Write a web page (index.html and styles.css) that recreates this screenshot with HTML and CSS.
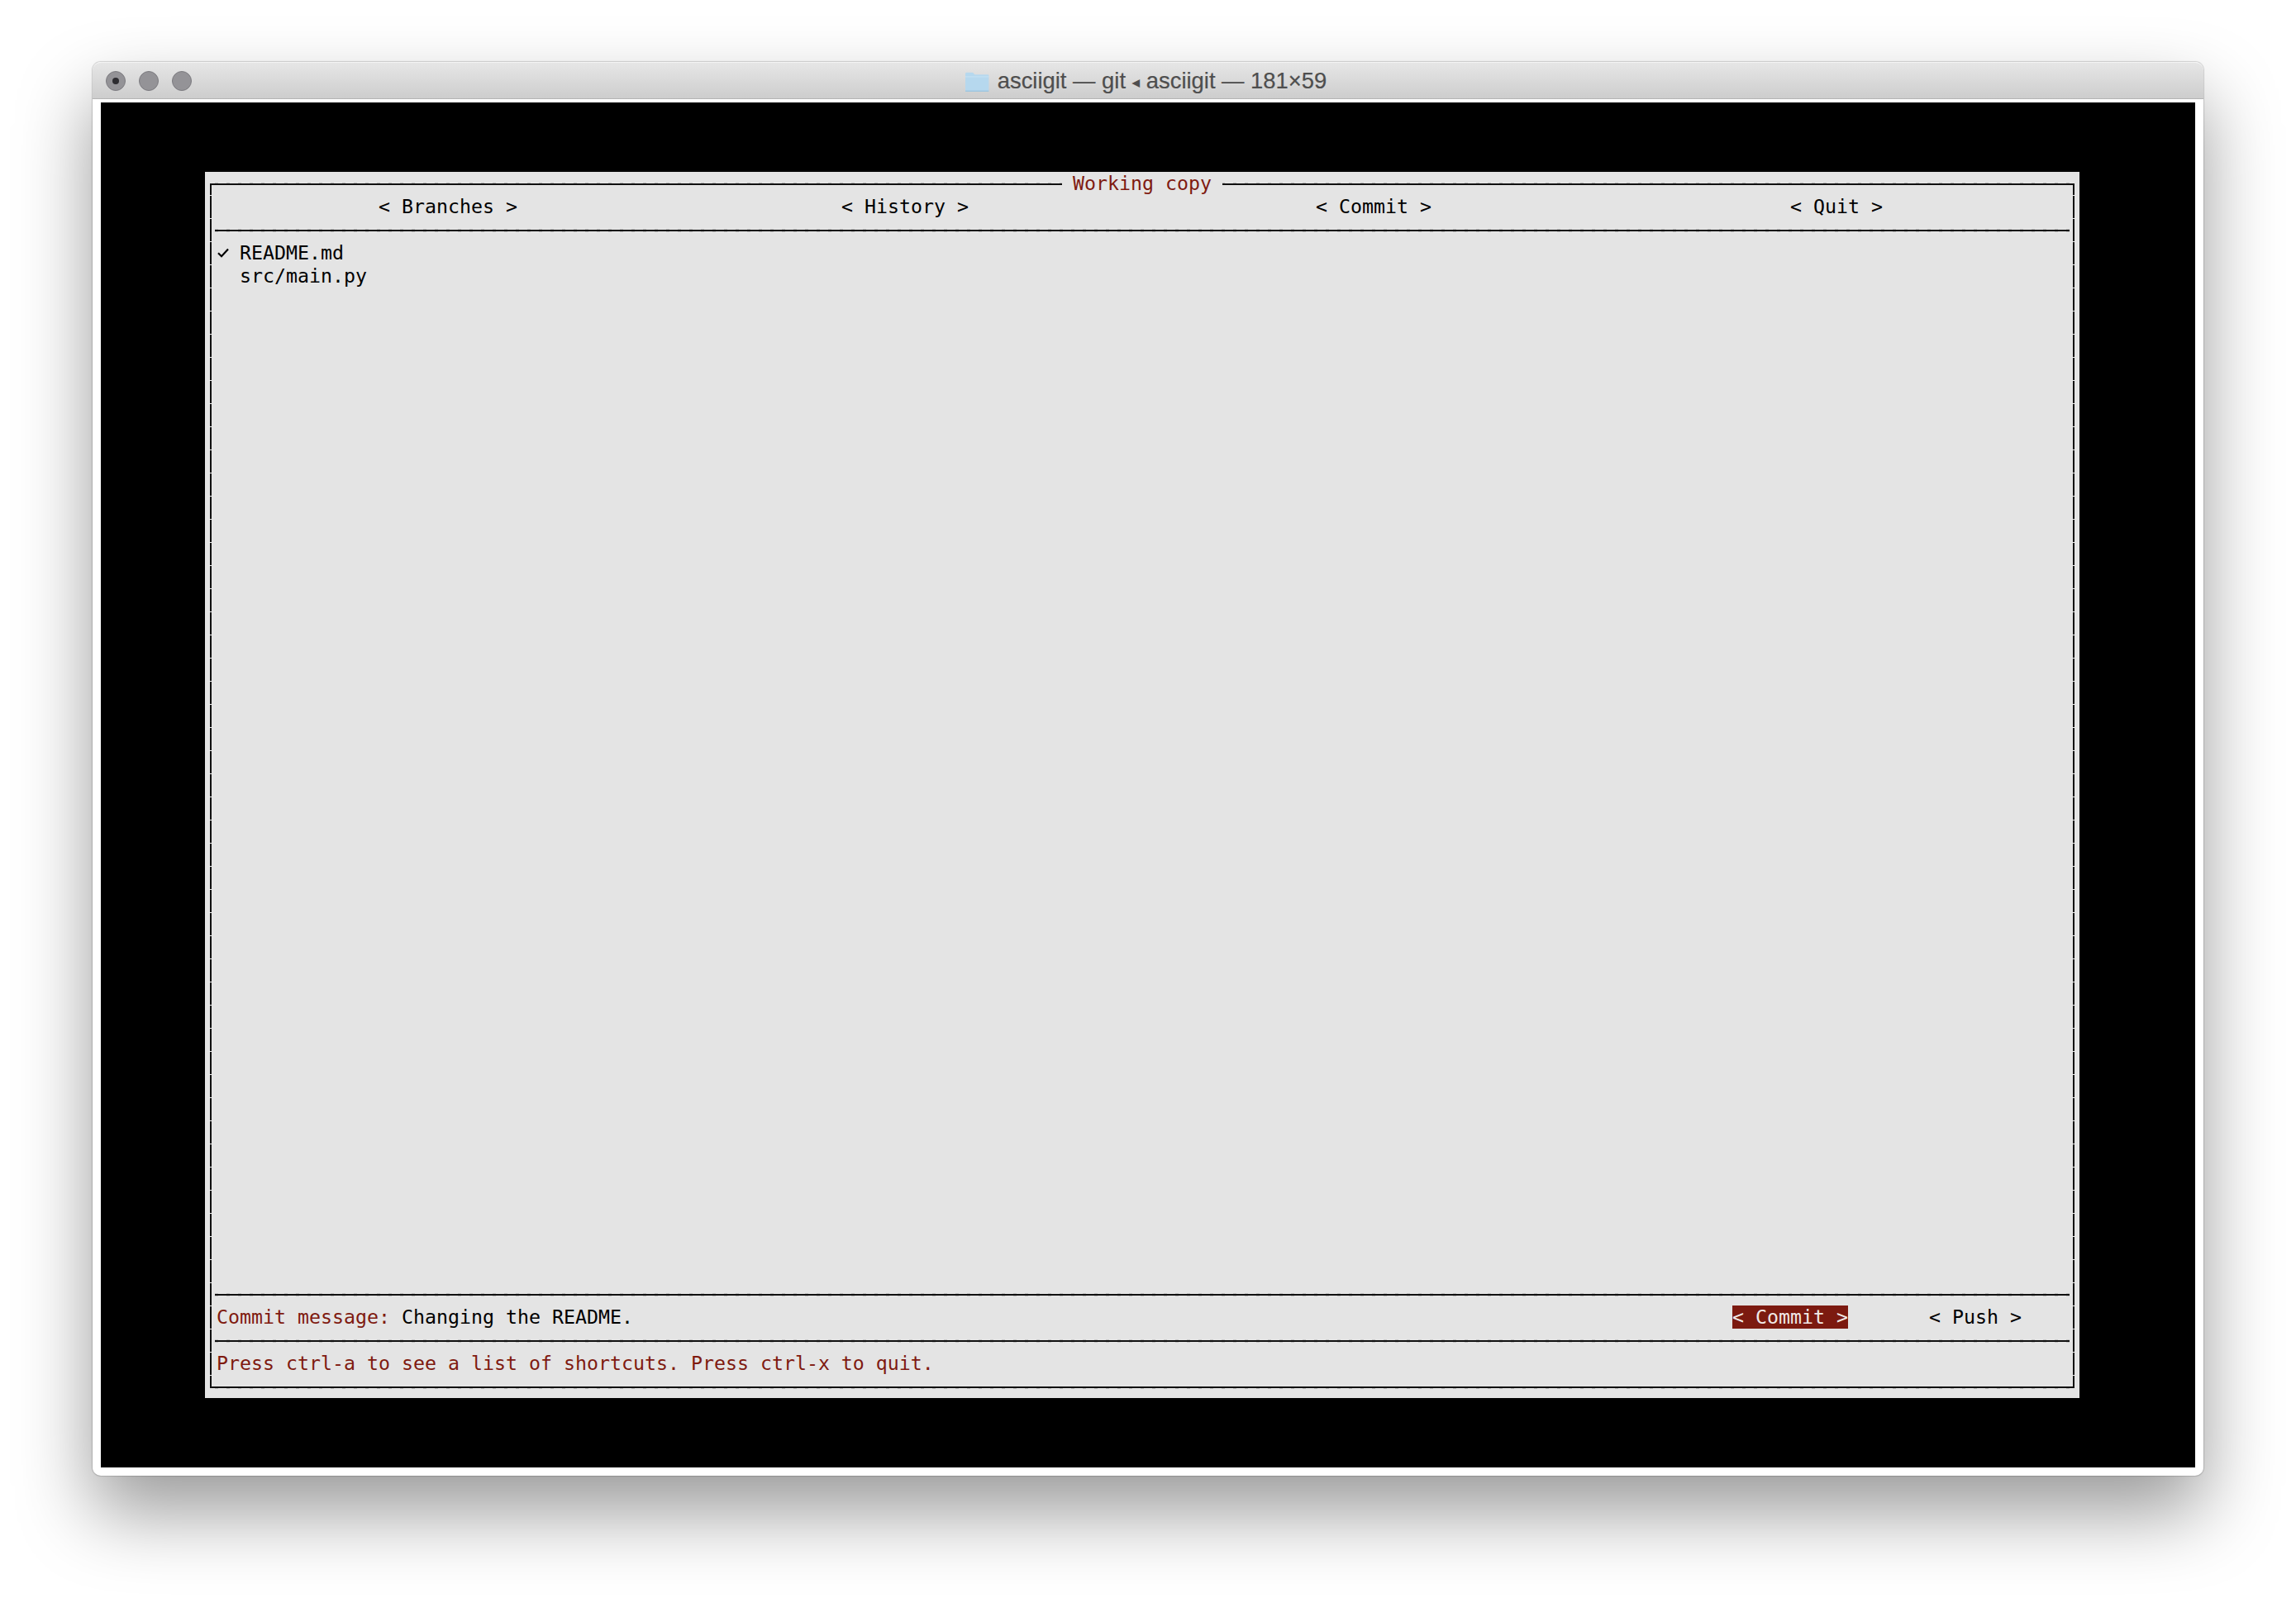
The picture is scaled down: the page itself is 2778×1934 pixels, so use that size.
FILE: index.html
```html
<!DOCTYPE html>
<html lang="en">
<head>
<meta charset="utf-8">
<title>asciigit</title>
<link rel="stylesheet" href="styles.css">
</head>
<body>
<div class="window">
  <header class="titlebar">
    <div class="lights">
      <span class="light light-active"></span>
      <span class="light"></span>
      <span class="light"></span>
    </div>
    <div class="title">
      <svg class="folder" width="30" height="24" viewBox="0 0 30 24" aria-hidden="true">
        <path d="M1 2.5C1 1.4 1.7.8 2.8.8h6.4c.8 0 1.3.3 1.8.9l1.4 1.5H28c.8 0 1.4.6 1.4 1.4v17.6c0 .8-.6 1.4-1.4 1.4H2.4c-.8 0-1.4-.6-1.4-1.4z" fill="#b6d8ee"/>
        <path d="M1 5.4h28.4v1H1z" fill="#c8e3f4"/>
        <path d="M1 22.6h28.4v.8c0 .3-.4.6-1.4.6H2.4c-1 0-1.4-.3-1.4-.6z" fill="#9fc6df"/>
      </svg>
      <span class="title-text">asciigit — git <span class="caret">◂</span> asciigit — 181×59</span>
    </div>
  </header>
  <main class="terminal">
    <section class="panel">
      <div class="frame">
        <div class="frame-title">Working copy</div>
        <nav class="row tabs">
          <span>&lt; Branches &gt;</span>
          <span>&lt; History &gt;</span>
          <span>&lt; Commit &gt;</span>
          <span>&lt; Quit &gt;</span>
        </nav>
        <div class="rule"></div>
        <ul class="files">
          <li class="row file">
            <span class="check">
              <svg width="14" height="12" viewBox="0 0 14 12" aria-hidden="true">
                <path d="M1 6.2l4 4L13 1.4" fill="none" stroke="#000" stroke-width="2.2"/>
              </svg>
            </span>
            <span>README.md</span>
          </li>
          <li class="row file">
            <span class="check"></span>
            <span>src/main.py</span>
          </li>
        </ul>
        <div class="rule"></div>
        <div class="row commit-row">
          <div class="message"><span class="red">Commit message: </span>Changing the README.</div>
          <span class="button button-focus">&lt; Commit &gt;</span>
          <span class="button">&lt; Push &gt;</span>
        </div>
        <div class="rule"></div>
        <div class="row red">Press ctrl-a to see a list of shortcuts. Press ctrl-x to quit.</div>
      </div>
    </section>
  </main>
</div>
</body>
</html>
```
FILE: styles.css
```css
* { box-sizing: border-box; }

html, body { margin: 0; background: #fff; }

body {
  width: 2778px;
  height: 1934px;
  padding: 75px 112px 148px;
  overflow: hidden;
}

.window {
  width: 2554px;
  height: 1711px;
  display: flex;
  flex-direction: column;
  background: #fff;
  border-radius: 10px;
  box-shadow: 0 44px 90px rgba(0, 0, 0, .4), 0 0 1px 1px rgba(0, 0, 0, .16);
}

.titlebar {
  height: 45px;
  flex: none;
  position: relative;
  display: flex;
  align-items: center;
  justify-content: center;
  padding-top: 2px;
  border-radius: 10px 10px 0 0;
  border-top: 1px solid #f4f4f4;
  border-bottom: 1px solid #b4b4b4;
  background: linear-gradient(#e6e6e6, #cdcdcd);
}

.lights {
  position: absolute;
  left: 16px;
  top: 10px;
  display: flex;
  gap: 16px;
}

.light {
  width: 24px;
  height: 24px;
  border-radius: 50%;
  background: #949397;
  border: 1px solid #7c7b80;
  display: flex;
  align-items: center;
  justify-content: center;
}

.light-active::after {
  content: "";
  width: 8px;
  height: 8px;
  border-radius: 50%;
  background: #2d2c30;
}

.title {
  display: flex;
  align-items: center;
  gap: 10px;
  margin-right: 6px;
  font-family: "Liberation Sans", sans-serif;
  font-size: 27.4px;
  line-height: 40px;
  color: #4e4e4e;
  white-space: pre;
  -webkit-text-stroke: .2px #4e4e4e;
}

.caret { font-family: "DejaVu Sans", sans-serif; font-size: 19px; vertical-align: 1px; }

.terminal {
  flex: none;
  height: 1652px;
  margin: 4px 10px 10px;
  padding: 84px 140px 84px 126px;
  background: #000;
  display: flex;
}

.panel {
  flex: 1;
  display: flex;
  padding: 14px 6px 12px;
  background: #e4e4e4;
  color: #000;
  font-family: "DejaVu Sans Mono", monospace;
  font-size: 23.25px;
  line-height: 28px;
}

.frame {
  flex: 1;
  position: relative;
  display: flex;
  flex-direction: column;
  padding: 12px 6px 14px;
  border: 2px solid #101010;
}

.frame::before {
  content: "";
  position: absolute;
  inset: -3px;
  pointer-events: none;
  background-image:
    linear-gradient(90deg, #bcbcbc 0 4px, transparent 4px),
    linear-gradient(90deg, #bcbcbc 0 4px, transparent 4px),
    linear-gradient(#eeeeee 0 1px, transparent 1px),
    linear-gradient(#eeeeee 0 1px, transparent 1px);
  background-size: 14px 1px, 14px 1px, 4px 28px, 4px 28px;
  background-repeat: repeat-x, repeat-x, repeat-y, repeat-y;
  background-position: 7px 0, 7px 100%, 0 15px, 100% 15px;
}

.frame-title {
  position: absolute;
  z-index: 1;
  left: 1029px;
  top: -16px;
  padding: 0 13px;
  background: #e4e4e4;
  color: #7f1a10;
  white-space: pre;
}

.row { height: 28px; flex: none; white-space: pre; }

.tabs {
  display: grid;
  grid-template-columns: 560px 574px 574px auto;
  padding-left: 196px;
}

.rule {
  flex: none;
  height: 4px;
  margin: 13px -2px 11px;
  background-image:
    linear-gradient(#101010, #101010),
    linear-gradient(90deg, #c4c4c4 0 4px, transparent 4px);
  background-size: 100% 2px, 14px 100%;
  background-repeat: no-repeat, repeat-x;
  background-position: 0 1px, 0 0;
}

.files {
  flex: 1;
  margin: 0;
  padding: 0;
  list-style: none;
}

.file { display: flex; }

.check {
  width: 28px;
  display: flex;
  align-items: center;
  padding-left: 1px;
}

.commit-row { display: flex; padding-right: 56px; }

.message { flex: 1; }

.red { color: #7f1a10; }

.button { margin-left: 98px; }

.message + .button { margin-left: 0; }

.button-focus { background: #7c1a10; color: #f1e9e7; }
```
